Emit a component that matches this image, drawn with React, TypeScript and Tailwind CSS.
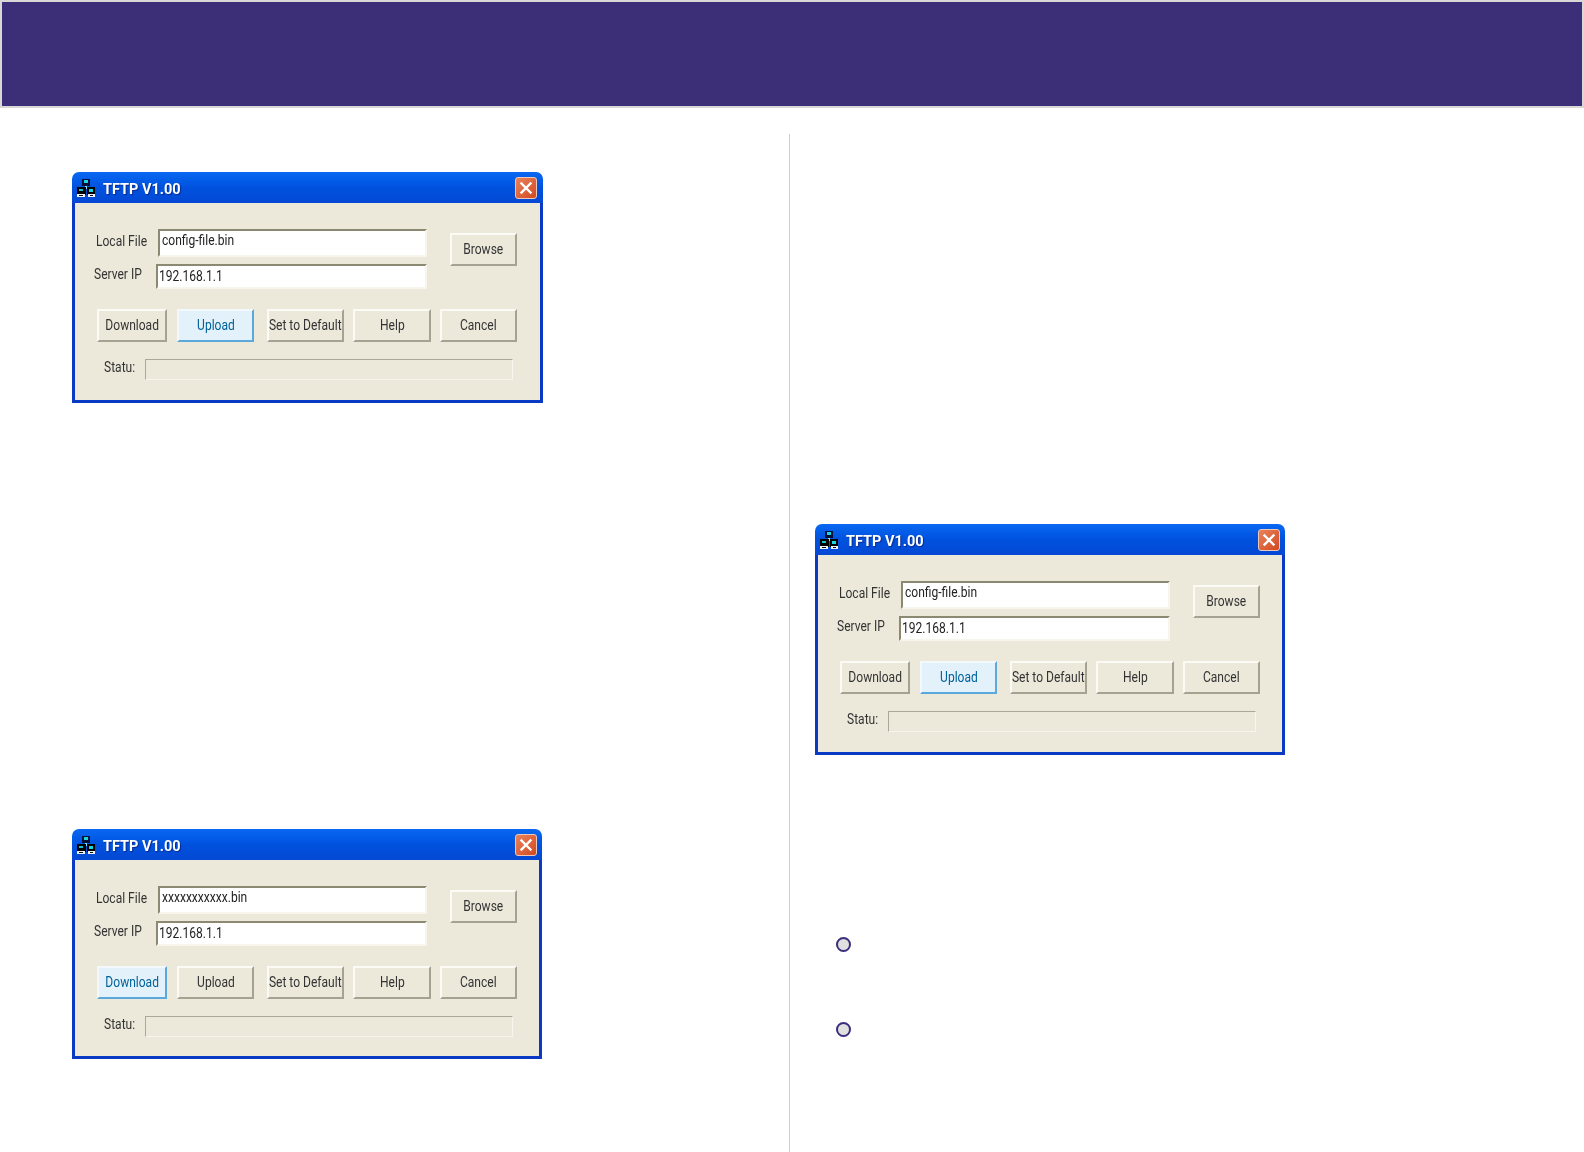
import React from 'react';

const font = "font-['Roboto','Liberation_Sans',Arial,sans-serif]";

const NetIcon: React.FC = () => (
  <svg width="18" height="18" viewBox="0 0 18 18" className="shrink-0">
    <path d="M5 0h8v7H5z" fill="#05103a" />
    <path d="M7 1h4v3H7z" fill="#18d8e0" />
    <path d="M8 7h2v3H8z" fill="#7fe8f0" />
    <path d="M0 8h9v8H0z" fill="#000" />
    <path d="M2 10h4v2H2z" fill="#14c4d0" />
    <path d="M10 8h8v8h-8z" fill="#000" />
    <path d="M12 10h4v3h-4z" fill="#18d8e0" />
    <path d="M0 15h8v3H0zM11 15h7v3h-7z" fill="#eef2f6" />
    <path d="M2 16h4v1H2zM13 16h3v1h-3z" fill="#111" />
  </svg>
);

const CloseButton: React.FC = () => (
  <div className="w-[22px] h-[22px] rounded-[3px] border border-[#f0c8b8] bg-gradient-to-br from-[#e8825c] to-[#d2481c] flex items-center justify-center shrink-0">
    <svg width="14" height="14" viewBox="0 0 14 14">
      <path d="M2.5 2.5l9 9M11.5 2.5l-9 9" stroke="#fff" strokeWidth="2.4" strokeLinecap="square" />
    </svg>
  </div>
);

// the old dialog font is tall and narrow, so the text gets squeezed sideways
const Narrow: React.FC<{ children: React.ReactNode; className?: string }> = ({ children, className }) => (
  <span className={`inline-block whitespace-nowrap scale-x-[0.86] text-[14px] ${className ?? 'origin-left'}`}>{children}</span>
);

const XpButton: React.FC<{ label: string; active?: boolean; className: string }> = ({ label, active, className }) => (
  <button
    className={`h-[33px] shrink-0 border-2 flex items-center justify-center ${
      active
        ? 'bg-[#e3f1fa] text-[#00619a] border-t-[#f2f8fc] border-l-[#f2f8fc] border-r-[#5ba8dc] border-b-[#5ba8dc]'
        : 'bg-[#ece9db] text-[#333] border-t-[#fbfaf5] border-l-[#fbfaf5] border-r-[#a5a292] border-b-[#a5a292]'
    } ${className}`}
  >
    <Narrow className="origin-center">{label}</Narrow>
  </button>
);

const Field: React.FC<{ value: string; className: string }> = ({ value, className }) => (
  <div className={`bg-white border-2 border-t-[#8c8973] border-l-[#8c8973] border-r-[#f7f5ec] border-b-[#f7f5ec] text-[#222] leading-[18px] ${className}`}>
    <Narrow>{value}</Narrow>
  </div>
);

const TftpDialog: React.FC<{ file: string; active: 'Download' | 'Upload'; className?: string; bodyClass?: string; wide?: boolean }> = ({ file, active, className, bodyClass, wide }) => (
  <div className={`${wide ? 'w-[471px]' : 'w-[470px]'} blur-[0.5px] ${font} ${className ?? ''}`}>
    <div className={`h-[31px] rounded-t-[7px] bg-gradient-to-b from-[#0a68f2] via-[#0052de] to-[#0448d4] flex items-center pl-[5px] ${wide ? 'pr-[6px]' : 'pr-[5px]'}`}>
      <NetIcon />
      <span className="ml-[8px] mt-[4px] text-[14.5px] font-bold text-white [text-shadow:1px_1px_1px_#0a2a90]">TFTP V1.00</span>
      <div className="flex-1" />
      <CloseButton />
    </div>
    <div className={`border-[3px] border-t-0 border-[#0a3ac4] bg-[#ece9db] pt-[26px] ${bodyClass ?? 'pb-[20px]'}`}>
      <div className="flex">
        <div className="w-[352px]">
          <div className="h-[28px] flex items-center justify-between pl-[21px] text-[#333]">
            <Narrow className="origin-left scale-x-[0.82] -mt-[4px]">Local File</Narrow>
            <Field value={file} className="w-[269px] h-[28px] pl-[2px]" />
          </div>
          <div className="h-[25px] mt-[7px] flex items-center justify-between pl-[19px] text-[#333]">
            <Narrow className="origin-left scale-x-[0.84] -mt-[5px]">Server IP</Narrow>
            <Field value="192.168.1.1" className="w-[271px] h-[25px] pl-[1px] pt-[1px]" />
          </div>
        </div>
        <XpButton label="Browse" className="w-[67px] ml-[23px] mt-[4px]" />
      </div>
      <div className="flex mt-[20px] pl-[22px]">
        <XpButton label="Download" active={active === 'Download'} className="w-[70px]" />
        <XpButton label="Upload" active={active === 'Upload'} className="w-[77px] ml-[10px]" />
        <XpButton label="Set to Default" className="w-[77px] ml-[13px]" />
        <XpButton label="Help" className="w-[78px] ml-[9px]" />
        <XpButton label="Cancel" className="w-[77px] ml-[9px]" />
      </div>
      <div className="flex items-center mt-[17px] pl-[29px] text-[#333]">
        <div className="w-[41px] -mt-[6px]"><Narrow>Statu:</Narrow></div>
        <div className="w-[368px] h-[21px] border border-t-[#aca899] border-l-[#aca899] border-r-[#f7f5ec] border-b-[#f7f5ec]" />
      </div>
    </div>
  </div>
);

const Bullet: React.FC<{ className: string }> = ({ className }) => (
  <div className={`w-[15px] h-[15px] rounded-full border-[2.5px] border-[#3b2e7e] bg-[#e0e0e0] ${className}`} />
);

export default function App() {
  return (
    <div className="w-[1584px] h-[1152px] overflow-hidden bg-white">
      <div className="h-[108px] bg-[#3c2f78] border-2 border-[#d8d8d8]" />
      <div className="flex mt-[26px] h-[1018px]">
        <div className="w-[789px] pl-[72px] pt-[38px]">
          <TftpDialog file="config-file.bin" active="Upload" wide />
          <TftpDialog file="xxxxxxxxxxx.bin" active="Download" bodyClass="pb-[19px]" className="mt-[426px]" />
        </div>
        <div className="flex-1 border-l border-[#cfcfcf] pl-[25px] pt-[390px]">
          <TftpDialog file="config-file.bin" active="Upload" />
          <Bullet className="ml-[21px] mt-[182px]" />
          <Bullet className="ml-[21px] mt-[70px]" />
        </div>
      </div>
    </div>
  );
}
